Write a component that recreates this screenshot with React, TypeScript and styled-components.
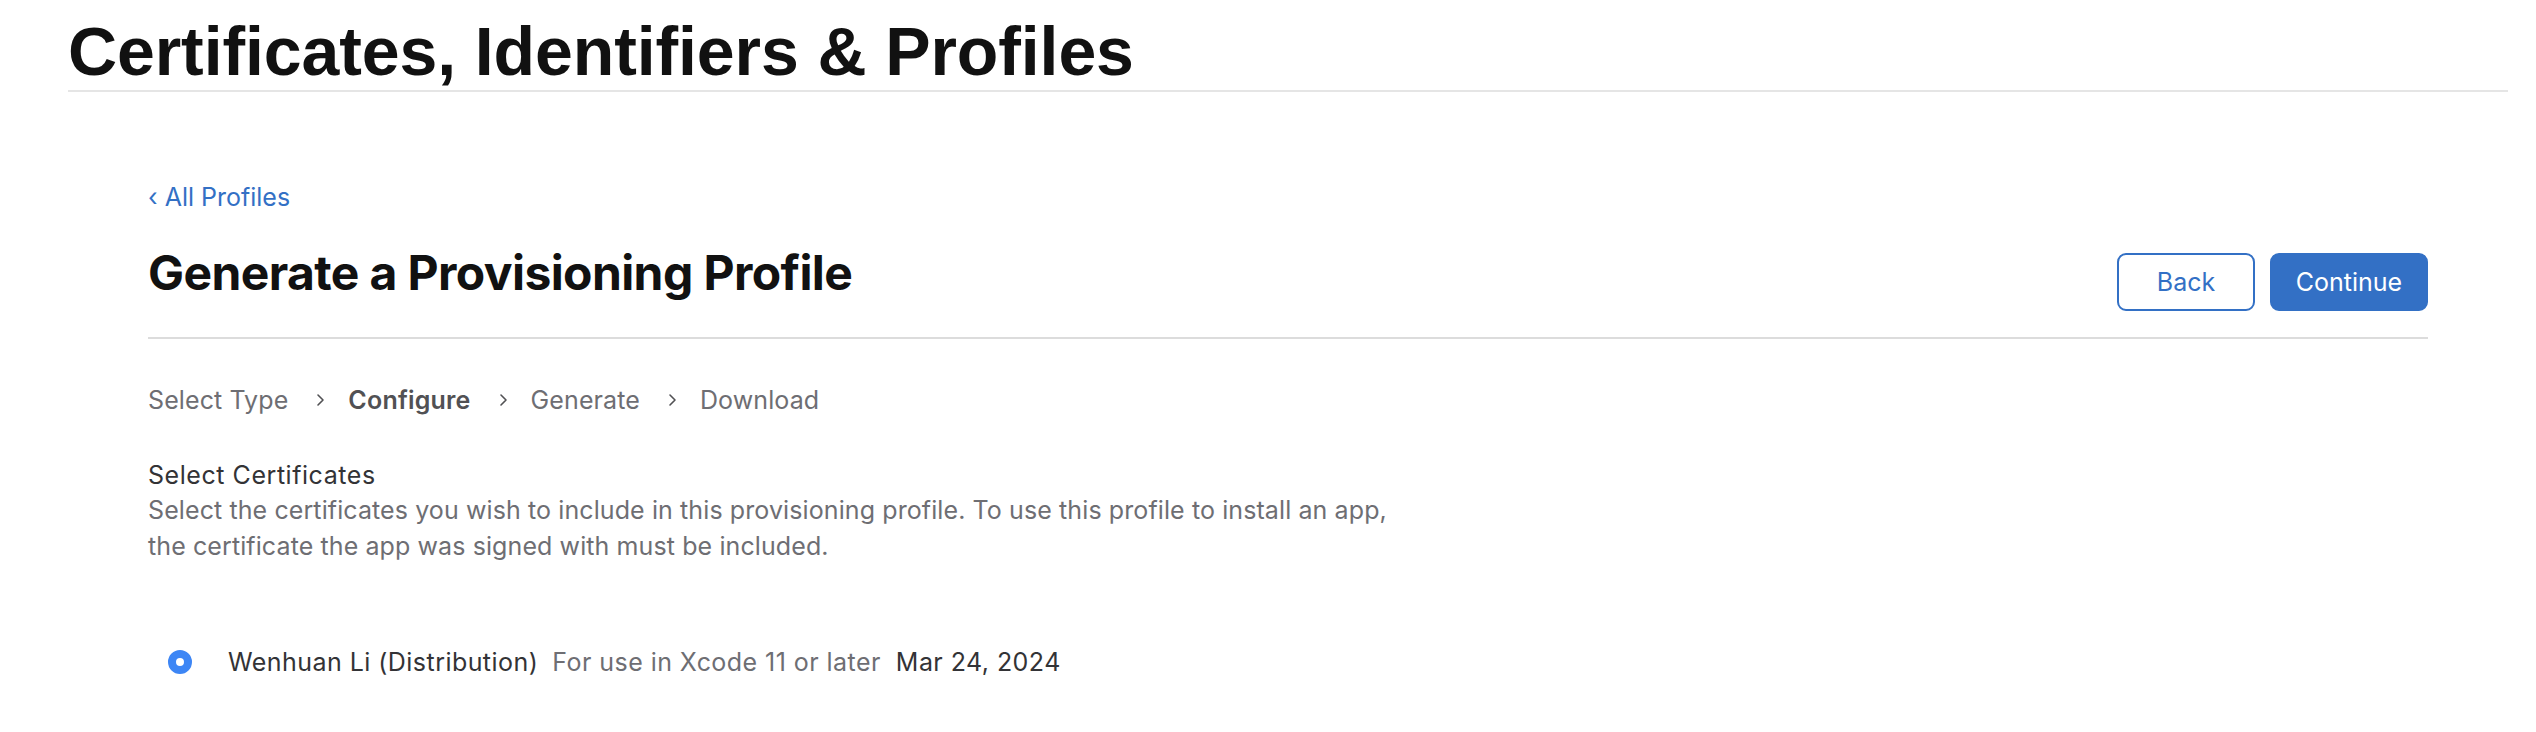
import React from 'react';
import styled, { createGlobalStyle } from 'styled-components';

const GlobalStyle = createGlobalStyle`
  html, body {
    margin: 0;
    padding: 0;
    background: #ffffff;
  }
  body {
    font-family: Inter, "Noto Sans", "Liberation Sans", sans-serif;
    color: #1d1d1f;
    -webkit-font-smoothing: antialiased;
  }
`;

const Page = styled.div`
  min-height: 732px;
  background: #fff;
`;

const Header = styled.header`
  padding: 0 28px 0 68px;
`;

const HeaderTitle = styled.h1`
  margin: 0;
  padding: 17px 0 5px;
  font-family: "Liberation Sans", Arial, sans-serif;
  font-size: 68px;
  line-height: 68px;
  font-weight: 700;
  letter-spacing: -0.1px;
  color: #111;
  border-bottom: 2px solid #e5e5e5;
`;

const Main = styled.main`
  padding: 87px 108px 0 148px;
`;

const BackLink = styled.a`
  display: block;
  font-size: 25px;
  line-height: 36px;
  color: #3370c5;
  text-decoration: none;
  cursor: pointer;
`;

const TitleRow = styled.div`
  display: flex;
  align-items: flex-end;
  justify-content: space-between;
  margin-top: 29px;
  padding-bottom: 26px;
  border-bottom: 2px solid #dcdcdc;
`;

const PageTitle = styled.h2`
  margin: 0 0 9px;
  font-size: 48px;
  line-height: 58px;
  font-weight: 700;
  letter-spacing: -0.6px;
  color: #111;
`;

const Actions = styled.div`
  display: flex;
  gap: 15px;
`;

const Button = styled.button<{ primary?: boolean }>`
  height: 58px;
  width: ${({ primary }) => (primary ? '158px' : '138px')};
  box-sizing: border-box;
  border: 2px solid #3370c5;
  border-radius: 9px;
  background: ${({ primary }) => (primary ? '#3370c5' : '#fff')};
  color: ${({ primary }) => (primary ? '#fff' : '#3370c5')};
  font-family: Inter, "Noto Sans", sans-serif;
  font-size: 25px;
  cursor: pointer;
`;

const Steps = styled.ol`
  display: flex;
  align-items: center;
  list-style: none;
  margin: 43px 0 0;
  padding: 0;
`;

const Step = styled.li<{ current?: boolean }>`
  display: flex;
  align-items: center;
  font-size: 25px;
  line-height: 36px;
  letter-spacing: ${({ current }) => (current ? '0.2px' : '0.1px')};
  font-weight: ${({ current }) => (current ? 600 : 400)};
  color: ${({ current }) => (current ? '#515154' : '#6e6e73')};
`;

const Chevron = styled.svg`
  width: 9px;
  height: 14px;
  margin: 0 23px 0 28px;
  flex-shrink: 0;
`;

const Section = styled.section`
  margin-top: 40px;
`;

const SectionLabel = styled.h3`
  margin: 0;
  font-size: 25px;
  line-height: 34px;
  font-weight: 400;
  letter-spacing: 0.55px;
  color: #333336;
`;

const SectionText = styled.p`
  margin: 0;
  max-width: 1270px;
  font-size: 25px;
  line-height: 36px;
  letter-spacing: 0.1px;
  color: #6e6e73;
`;

const CertList = styled.div`
  margin-top: 80px;
`;

const CertRow = styled.label`
  display: flex;
  align-items: center;
  padding-left: 20px;
  font-size: 25px;
  line-height: 36px;
  letter-spacing: 0.45px;
  cursor: pointer;
`;

const Radio = styled.span`
  width: 24px;
  height: 24px;
  box-sizing: border-box;
  border-radius: 50%;
  border: 8px solid #3d86f5;
  background: #fff;
  margin-right: 36px;
  flex-shrink: 0;
`;

const CertName = styled.span`
  color: #333336;
`;

const CertNote = styled.span`
  margin-left: 14px;
  color: #6e6e73;
`;

const CertDate = styled.span`
  margin-left: 15px;
  color: #333336;
`;

const steps = [
  { label: 'Select Type' },
  { label: 'Configure', current: true },
  { label: 'Generate' },
  { label: 'Download' },
];

const App: React.FC = () => {
  return (
    <Page>
      <GlobalStyle />
      <Header>
        <HeaderTitle>Certificates, Identifiers &amp; Profiles</HeaderTitle>
      </Header>
      <Main>
        <BackLink>‹ All Profiles</BackLink>
        <TitleRow>
          <PageTitle>Generate a Provisioning Profile</PageTitle>
          <Actions>
            <Button>Back</Button>
            <Button primary>Continue</Button>
          </Actions>
        </TitleRow>

        <Steps>
          {steps.map((step, index) => (
            <Step key={step.label} current={step.current}>
              {step.label}
              {index < steps.length - 1 && (
                <Chevron viewBox="0 0 9 14">
                  <path
                    d="M2 2l5 5-5 5"
                    fill="none"
                    stroke="#515154"
                    strokeWidth="1.6"
                    strokeLinecap="round"
                    strokeLinejoin="round"
                  />
                </Chevron>
              )}
            </Step>
          ))}
        </Steps>

        <Section>
          <SectionLabel>Select Certificates</SectionLabel>
          <SectionText>
            Select the certificates you wish to include in this provisioning profile. To use this
            profile to install an app, the certificate the app was signed with must be included.
          </SectionText>
        </Section>

        <CertList>
          <CertRow>
            <Radio />
            <CertName>Wenhuan Li (Distribution)</CertName>
            <CertNote>For use in Xcode 11 or later</CertNote>
            <CertDate>Mar 24, 2024</CertDate>
          </CertRow>
        </CertList>
      </Main>
    </Page>
  );
};

export default App;
